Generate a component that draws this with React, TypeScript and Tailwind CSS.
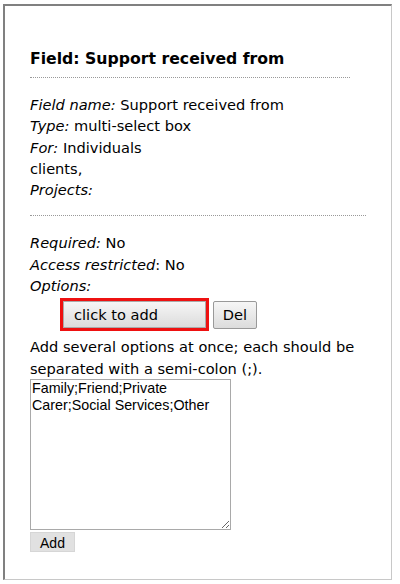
import React from 'react';

export default function App() {
  return (
    <div className="w-[400px] h-[584px] bg-white pt-[4px] pl-[3px] font-['DejaVu_Sans',sans-serif] text-black">
      <div className="w-[389px] h-[576px] border-t-2 border-l-2 border-t-[#808080] border-l-[#808080] border-r border-b border-r-[#c8c8c8] border-b-[#c8c8c8] pl-[25px] pt-[43px]">
        {/* Titulo */}
        <h2 className="text-[15.7px] font-bold leading-[20px]">Field: Support received from</h2>
        <div className="w-[320px] mt-[8px] border-t border-dotted border-[#999]" />

        {/* Datos del campo */}
        <div className="mt-[16px] text-[14.6px] leading-[21.3px]">
          <div><i>Field name:</i> Support received from</div>
          <div><i>Type:</i> multi-select box</div>
          <div><i>For:</i> Individuals</div>
          <div>clients,</div>
          <div><i>Projects:</i></div>
        </div>
        <div className="w-[336px] mt-[15px] border-t border-dotted border-[#999]" />

        <div className="mt-[16px] text-[14.6px] leading-[21.3px]">
          <div><i>Required:</i> No</div>
          <div><i>Access restricted</i>: No</div>
          <div><i>Options:</i></div>
        </div>

        {/* Botones */}
        <div className="flex items-center gap-[4px] pl-[30px] mt-[2px]">
          <div className="border-[3px] border-[#ee1111] w-[149px] h-[33px] p-0">
            <button className="w-full h-full text-left pl-[10px] text-[14.6px] bg-gradient-to-b from-[#f6f6f6] to-[#dcdcdc] border border-[#aaa]">
              click to add
            </button>
          </div>
          <button className="w-[44px] h-[28px] text-[14.6px] bg-gradient-to-b from-[#f6f6f6] to-[#dcdcdc] border border-[#999] rounded-[2px]">
            Del
          </button>
        </div>

        <div className="mt-[5px] text-[14.6px] leading-[21.3px] w-[345px]">
          Add several options at once; each should be separated with a semi-colon (;).
        </div>

        <textarea
          className="block mt-0 w-[201px] h-[151px] border border-[#a9a9a9] resize font-['Liberation_Sans',sans-serif] text-[14.3px] leading-[17.5px] px-[1px] py-0 outline-none"
          defaultValue={'Family;Friend;Private Carer;Social Services;Other'}
        />
        <button className="mt-[2px] block w-[45px] h-[20px] bg-[#e1e1e1] border border-[#d6d6d6] font-['Liberation_Sans',sans-serif] text-[14px]">
          Add
        </button>
      </div>
    </div>
  );
}
